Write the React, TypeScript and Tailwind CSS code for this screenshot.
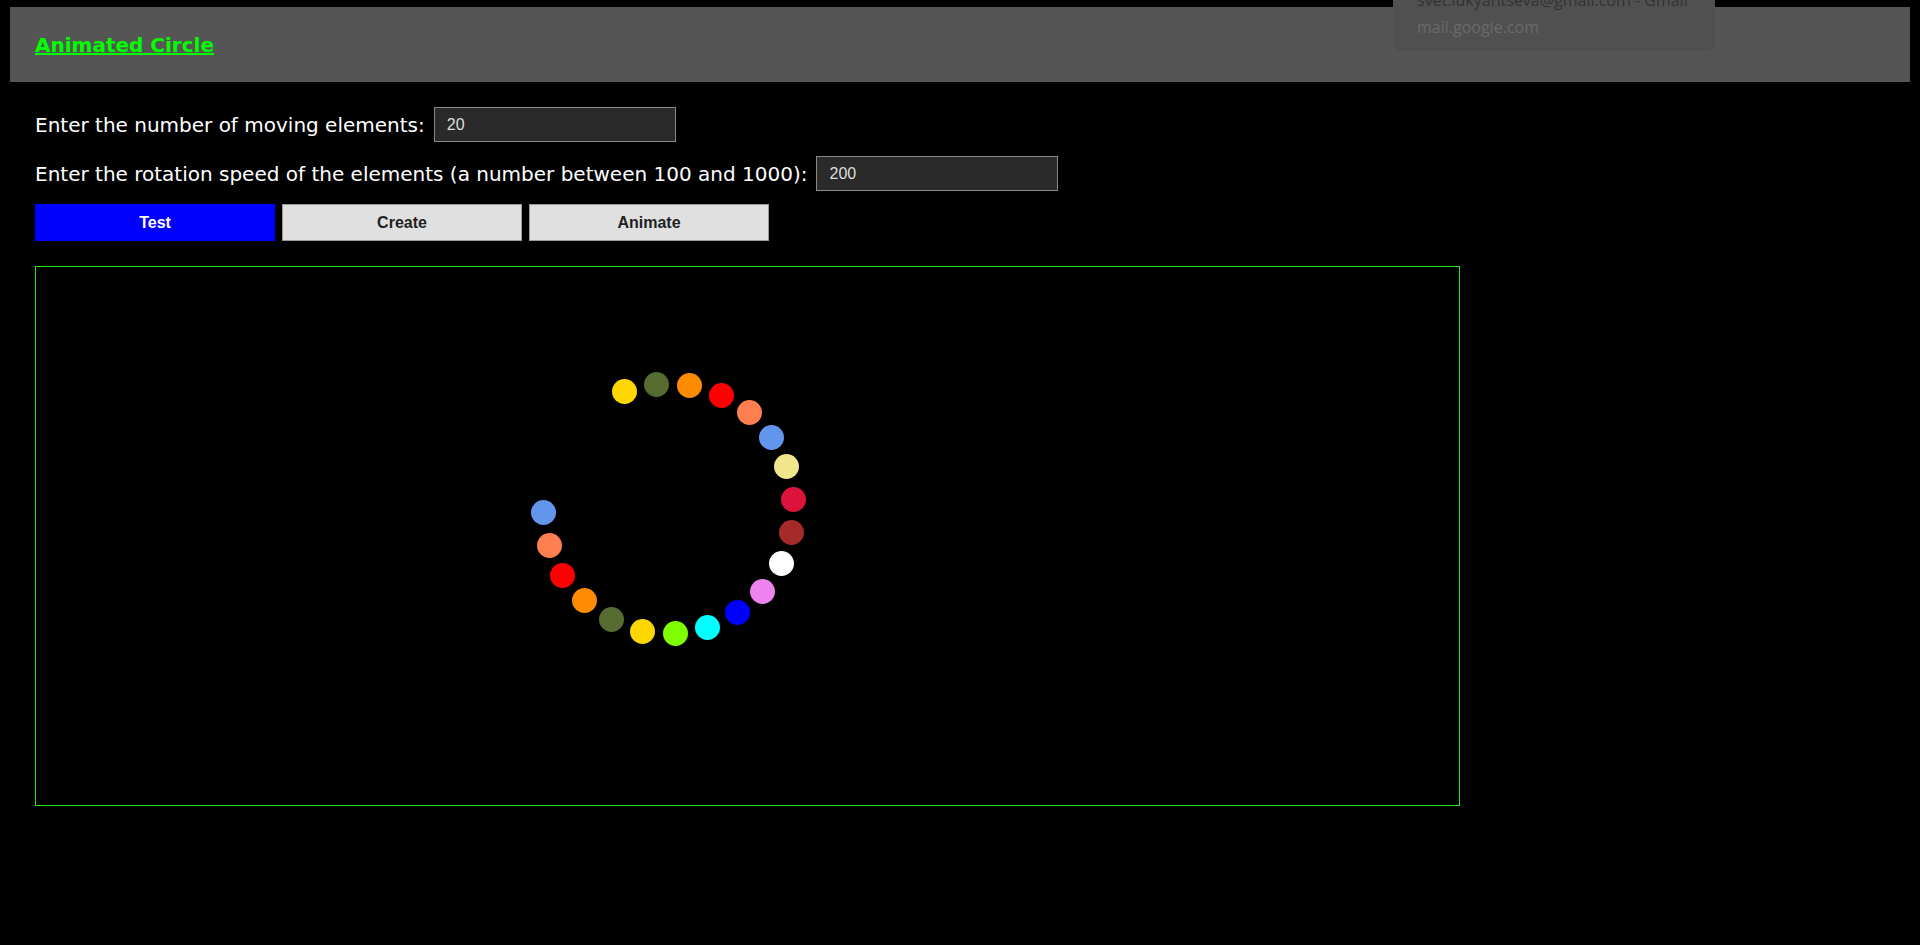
import React from 'react';

const dots = [
  { x: 624, y: 392, c: '#ffd700' },
  { x: 656, y: 385, c: '#556b2f' },
  { x: 689, y: 386, c: '#ff8c00' },
  { x: 721, y: 396, c: '#ff0000' },
  { x: 749, y: 413, c: '#ff7f50' },
  { x: 771, y: 438, c: '#6495ed' },
  { x: 786, y: 467, c: '#f0e68c' },
  { x: 793, y: 500, c: '#dc143c' },
  { x: 791, y: 533, c: '#a52a2a' },
  { x: 781, y: 564, c: '#ffffff' },
  { x: 762, y: 592, c: '#ee82ee' },
  { x: 737, y: 613, c: '#0000ff' },
  { x: 707, y: 628, c: '#00ffff' },
  { x: 675, y: 634, c: '#7fff00' },
  { x: 642, y: 632, c: '#ffd700' },
  { x: 611, y: 620, c: '#556b2f' },
  { x: 584, y: 601, c: '#ff8c00' },
  { x: 562, y: 576, c: '#ff0000' },
  { x: 549, y: 546, c: '#ff7f50' },
  { x: 543, y: 513, c: '#6495ed' },
];

const Field = ({ label, value }: { label: string; value: string }) => (
  <div className="flex items-center gap-[9px]">
    <label className="text-white text-[20px] font-['DejaVu_Sans',Verdana,sans-serif] leading-none">
      {label}
    </label>
    <input
      readOnly
      value={value}
      className="w-[242px] h-[35px] bg-[#2a2a2a] border border-[#888] px-3 text-[16px] text-[#ddd] font-['Liberation_Sans',Arial,sans-serif] outline-none"
    />
  </div>
);

const App = () => {
  return (
    <div className="min-h-screen bg-black pt-[7px] px-[10px] relative overflow-hidden">
      <header className="h-[75px] bg-[#555555] flex items-center px-[25px]">
        <a href="#" className="text-[#00ff00] font-bold text-[20px] underline font-['DejaVu_Sans',Verdana,sans-serif]">
          Animated Circle
        </a>
      </header>

      {/* browser tooltip left on the capture */}
      <div className="absolute left-[1393px] top-[-20px] w-[322px] h-[71px] rounded-b-lg bg-[#505050] font-['Open_Sans',sans-serif] px-6">
        <p className="text-[#333] text-[16px] mt-[12px] leading-none">svet.lukyantseva@gmail.com - Gmail</p>
        <p className="text-[#6a6a6a] text-[16px] mt-[11px] leading-none">mail.google.com</p>
      </div>

      <main className="px-[25px] pt-[25px]">
        <Field label="Enter the number of moving elements:" value="20" />
        <div className="mt-[14px]">
          <Field label="Enter the rotation speed of the elements (a number between 100 and 1000):" value="200" />
        </div>

        <div className="flex gap-[7px] mt-[13px] font-['Liberation_Sans',Arial,sans-serif] font-bold text-[16px]">
          <button className="w-[240px] h-[37px] bg-[#0000ff] text-white">Test</button>
          <button className="w-[240px] h-[37px] bg-[#e0e0e0] border border-[#999] text-[#222]">Create</button>
          <button className="w-[240px] h-[37px] bg-[#e0e0e0] border border-[#999] text-[#222]">Animate</button>
        </div>

        <div className="relative mt-[25px] w-[1425px] h-[540px] border border-[#1ee61e]">
          {dots.map((d, i) => (
            <span
              key={i}
              className="absolute w-[25px] h-[25px] rounded-full"
              style={{ left: d.x - 12.5 - 36, top: d.y - 12.5 - 268, backgroundColor: d.c }}
            />
          ))}
        </div>
      </main>
    </div>
  );
};

export default App;
